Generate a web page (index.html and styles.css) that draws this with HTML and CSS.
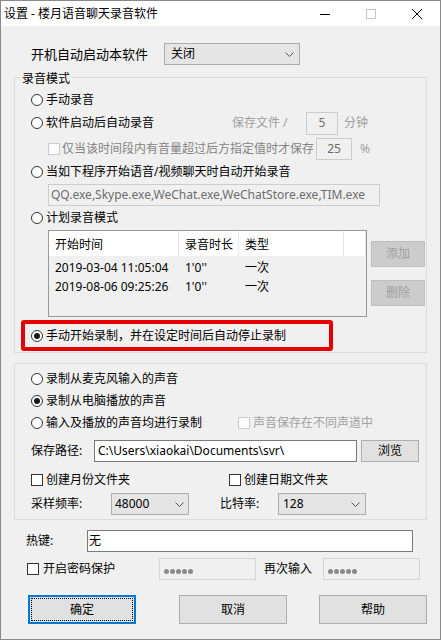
FILE: index.html
```html
<!DOCTYPE html>
<html lang="zh-CN">
<head>
<meta charset="utf-8">
<title>设置 - 楼月语音聊天录音软件</title>
<link rel="stylesheet" href="styles.css">
</head>
<body>
<div class="window">
  <div class="titlebar">
    <span class="title">设置 - 楼月语音聊天录音软件</span>
    <div class="caps">
      <span class="cap"><svg width="10" height="10" viewBox="0 0 10 10"><line x1="0" y1="5.5" x2="10" y2="5.5" stroke="#000" stroke-width="1"/></svg></span>
      <span class="cap"><svg width="10" height="10" viewBox="0 0 10 10"><rect x="0.5" y="0.5" width="9" height="9" fill="none" stroke="#c6c6c6" stroke-width="1"/></svg></span>
      <span class="cap"><svg width="10" height="10" viewBox="0 0 10 10"><path d="M0 0 L10 10 M10 0 L0 10" stroke="#000" stroke-width="1"/></svg></span>
    </div>
  </div>
  <div class="content">
    <div class="row-autostart">
      <span class="lbl-autostart">开机自动启动本软件</span>
      <div class="select sel-autostart"><span>关闭</span><svg class="chev" width="9" height="5" viewBox="0 0 9 5"><polyline points="0.5,0.5 4.5,4.5 8.5,0.5" fill="none" stroke="#555" stroke-width="1"/></svg></div>
    </div>

    <div class="group group1">
      <span class="group-label">录音模式</span>
      <div class="opt o-r1"><span class="radio"></span><span>手动录音</span></div>
      <div class="opt o-r2">
        <span class="radio"></span><span class="w-auto">软件启动后自动录音</span>
        <span class="dis w-save">保存文件 /</span>
        <span class="dbox box-5">5</span>
        <span class="dis unit">分钟</span>
      </div>
      <div class="opt o-chk">
        <span class="chk chk-dis"></span><span class="dis2">仅当该时间段内有音量超过后方指定值时才保存</span>
        <span class="dbox box-25">25</span>
        <span class="dis pct">%</span>
      </div>
      <div class="opt o-r3"><span class="radio"></span><span>当如下程序开始语音/视频聊天时自动开始录音</span></div>
      <div class="dbox procs">QQ.exe,Skype.exe,WeChat.exe,WeChatStore.exe,TIM.exe</div>
      <div class="opt o-r4"><span class="radio"></span><span>计划录音模式</span></div>
      <div class="listrow">
        <div class="list">
          <div class="list-head">
            <span class="col c1">开始时间</span>
            <span class="col c2">录音时长</span>
            <span class="col c3">类型</span>
            <span class="col c4"></span>
          </div>
          <div class="list-body">
            <div class="lrow"><span class="cell c1">2019-03-04 11:05:04</span><span class="cell c2">1'0''</span><span class="cell c3">一次</span></div>
            <div class="lrow"><span class="cell c1">2019-08-06 09:25:26</span><span class="cell c2">1'0''</span><span class="cell c3">一次</span></div>
          </div>
        </div>
        <div class="listbtns">
          <span class="btn-dis">添加</span>
          <span class="btn-dis">删除</span>
        </div>
      </div>
      <div class="redbox"><span class="radio on"></span><span>手动开始录制，并在设定时间后自动停止录制</span></div>
    </div>

    <div class="group group2">
      <div class="opt g2-r1"><span class="radio"></span><span>录制从麦克风输入的声音</span></div>
      <div class="opt g2-r2"><span class="radio on"></span><span>录制从电脑播放的声音</span></div>
      <div class="opt g2-r3"><span class="radio"></span><span class="w-both">输入及播放的声音均进行录制</span><span class="chk chk-dis chk-ch"></span><span class="dis">声音保存在不同声道中</span></div>
      <div class="opt path-row">
        <span class="lbl-path">保存路径:</span>
        <span class="textbox path">C:\Users\xiaokai\Documents\svr\</span>
        <span class="btn btn-browse">浏览</span>
      </div>
      <div class="opt chk-row">
        <span class="chk-item ci1"><span class="chk"></span><span>创建月份文件夹</span></span>
        <span class="chk-item"><span class="chk"></span><span>创建日期文件夹</span></span>
      </div>
      <div class="opt sel-row">
        <span class="lbl-rate">采样频率:</span>
        <div class="select sel-rate"><span>48000</span><svg class="chev" width="9" height="5" viewBox="0 0 9 5"><polyline points="0.5,0.5 4.5,4.5 8.5,0.5" fill="none" stroke="#555" stroke-width="1"/></svg></div>
        <span class="lbl-bit">比特率:</span>
        <div class="select sel-bit"><span>128</span><svg class="chev" width="9" height="5" viewBox="0 0 9 5"><polyline points="0.5,0.5 4.5,4.5 8.5,0.5" fill="none" stroke="#555" stroke-width="1"/></svg></div>
      </div>
    </div>

    <div class="hotkey-row">
      <span class="lbl-hot">热键:</span>
      <span class="textbox hot">无</span>
    </div>
    <div class="pwd-row">
      <span class="pwd-item"><span class="chk"></span><span>开启密码保护</span></span>
      <span class="pbox"><i></i><i></i><i></i><i></i><i></i></span>
      <span class="lbl-again">再次输入</span>
      <span class="pbox"><i></i><i></i><i></i><i></i><i></i></span>
    </div>
    <div class="btn-row">
      <span class="btn big ok">确定</span>
      <span class="btn big cancel">取消</span>
      <span class="btn big help">帮助</span>
    </div>
  </div>
</div>
</body>
</html>
```
FILE: styles.css
```css
* { box-sizing: border-box; }
body {
  margin: 0;
  font-family: "Noto Sans", "Noto Sans CJK SC", sans-serif;
  font-size: 12px;
  line-height: 16px;
  color: #000;
  background: #fff;
}
.window {
  width: 441px;
  height: 640px;
  border: 1px solid #8a8a8a;
  background: #f0f0f0;
  display: flex;
  flex-direction: column;
}
.titlebar {
  height: 25px;
  flex-shrink: 0;
  background: #fff;
  display: flex;
  align-items: center;
}
.title { flex: 1; padding-left: 3px; }
.caps { display: flex; height: 100%; }
.cap { width: 46px; display: flex; align-items: center; justify-content: center; }
.content { display: flex; flex-direction: column; }

.row-autostart {
  margin-top: 17px;
  height: 22px;
  padding-left: 30px;
  display: flex;
  align-items: center;
}
.lbl-autostart { width: 133px; font-size: 13px; }
.select {
  height: 22px;
  background: #e5e5e5;
  border: 1px solid #adadad;
  display: flex;
  align-items: center;
  justify-content: space-between;
  padding: 0 5px 0 6px;
}
.sel-autostart { width: 136px; }
.chev { display: block; }

.group {
  position: relative;
  margin-left: 13px;
  width: 413px;
  border: 1px solid #dcdcdc;
  display: flex;
  flex-direction: column;
}
.group1 { margin-top: 12px; padding-bottom: 1px; }
.group2 { margin-top: 10px; padding-bottom: 4px; }
.group-label {
  position: absolute;
  top: -7px;
  left: 5px;
  padding: 0 2px;
  background: #f0f0f0;
}
.opt {
  display: flex;
  align-items: center;
  padding-left: 16px;
  height: 20px;
}
.radio {
  position: relative;
  flex-shrink: 0;
  width: 12px;
  height: 12px;
  border: 1px solid #333;
  border-radius: 50%;
  background: #fff;
  margin-right: 3px;
}
.radio.on::after {
  content: "";
  position: absolute;
  left: 2px;
  top: 2px;
  width: 6px;
  height: 6px;
  border-radius: 50%;
  background: #1a1a1a;
}
.chk {
  flex-shrink: 0;
  width: 12px;
  height: 12px;
  border: 1px solid #333;
  background: #fff;
  margin-right: 3px;
}
.chk-dis { border-color: #cccccc; background: #fcfcfc; margin-right: 2px; }
.dis { color: #a0a0a0; }
.dis2 { color: #838383; }
.dbox {
  height: 23px;
  border: 1px solid #cccccc;
  background: #f0f0f0;
  color: #6d6d6d;
  display: flex;
  align-items: center;
  justify-content: center;
}

.o-r1 { margin-top: 12px; }
.o-r2 { margin-top: 1px; height: 24px; }
.w-auto { width: 186px; }
.w-save { width: 74px; }
.box-5 { width: 32px; }
.unit { margin-left: 6px; }
.o-chk { margin-top: 2px; height: 24px; padding-left: 33px; }
.box-25 { width: 36px; height: 22px; margin-left: 2px; }
.pct { margin-left: 8px; }
.o-r3 { margin-top: 1px; }
.procs {
  margin: 2px 0 0 33px;
  width: 332px;
  height: 22px;
  justify-content: flex-start;
  padding-left: 2px;
}
.o-r4 { margin-top: 2px; }

.listrow {
  display: flex;
  margin: 2px 0 0 33px;
  height: 87px;
}
.list {
  width: 319px;
  height: 87px;
  border: 1px solid #999;
  background: #f0f0f0;
}
.list-head {
  height: 25px;
  background: #fff;
  display: flex;
}
.col {
  border-right: 1px solid #e5e5e5;
  padding: 2px 0 0 6px;
  display: flex;
  align-items: center;
}
.c1 { width: 130px; }
.c2 { width: 60px; }
.c3 { width: 105px; }
.c4 { flex: 1; }
.list-body { padding-top: 2px; }
.lrow { display: flex; height: 19px; align-items: center; }
.cell { padding-left: 6px; }
.listbtns {
  margin-left: 4px;
  padding-top: 11px;
  display: flex;
  flex-direction: column;
  gap: 13px;
}
.btn-dis {
  width: 54px;
  height: 26px;
  background: #cccccc;
  border: 1px solid #bfbfbf;
  color: #a0a0a0;
  display: flex;
  align-items: center;
  justify-content: center;
}
.redbox {
  margin: 3px 0 0 6px;
  width: 312px;
  height: 31px;
  border: 4px solid #e60000;
  border-radius: 3px;
  display: flex;
  align-items: center;
  padding-left: 6px;
}

.g2-r1 { margin-top: 5px; }
.g2-r2 { margin-top: 2px; }
.g2-r3 { margin-top: 2px; }
.w-both { width: 192px; }
.chk-ch { margin-right: 3px; }
.path-row { margin-top: 7px; height: 22px; }
.lbl-path { width: 63px; }
.textbox {
  height: 22px;
  border: 1px solid #7a7a7a;
  background: #fff;
  display: flex;
  align-items: center;
}
.path { width: 263px; padding-left: 3px; }
.btn {
  background: #e1e1e1;
  border: 1px solid #adadad;
  display: flex;
  align-items: center;
  justify-content: center;
}
.btn-browse { width: 58px; height: 22px; margin-left: 4px; }
.chk-row { margin-top: 8px; }
.chk-item { display: flex; align-items: center; }
.ci1 { width: 198px; }
.sel-row { margin-top: 3px; height: 22px; }
.lbl-rate { width: 80px; }
.sel-rate { width: 78px; padding: 0 4px 0 3px; }
.lbl-bit { width: 58px; margin-left: 31px; }
.sel-bit { width: 88px; padding: 0 5px 0 4px; }

.hotkey-row {
  margin-top: 10px;
  height: 22px;
  padding-left: 25px;
  display: flex;
  align-items: center;
}
.lbl-hot { width: 61px; }
.hot { width: 326px; padding-left: 1px; }
.pwd-row {
  margin-top: 6px;
  height: 22px;
  padding-left: 26px;
  display: flex;
  align-items: center;
}
.pwd-item { width: 132px; display: flex; align-items: center; }
.pwd-item .chk { margin-right: 4px; }
.pbox {
  width: 97px;
  height: 22px;
  border: 1px solid #d5d5d5;
  background: #f0f0f0;
  display: flex;
  align-items: center;
  gap: 1px;
  padding: 4px 0 0 4px;
}
.pbox i {
  width: 5px;
  height: 5px;
  border-radius: 50%;
  background: #8a8a8a;
}
.lbl-again { width: 59px; margin-left: 8px; }
.btn-row {
  margin-top: 15px;
  padding-left: 27px;
  display: flex;
}
.big { width: 108px; height: 29px; }
.ok {
  border: 2px solid #0078d7;
  outline: 1px dotted #000;
  outline-offset: -4px;
}
.cancel { margin-left: 43px; }
.help { margin-left: 32px; }
```
